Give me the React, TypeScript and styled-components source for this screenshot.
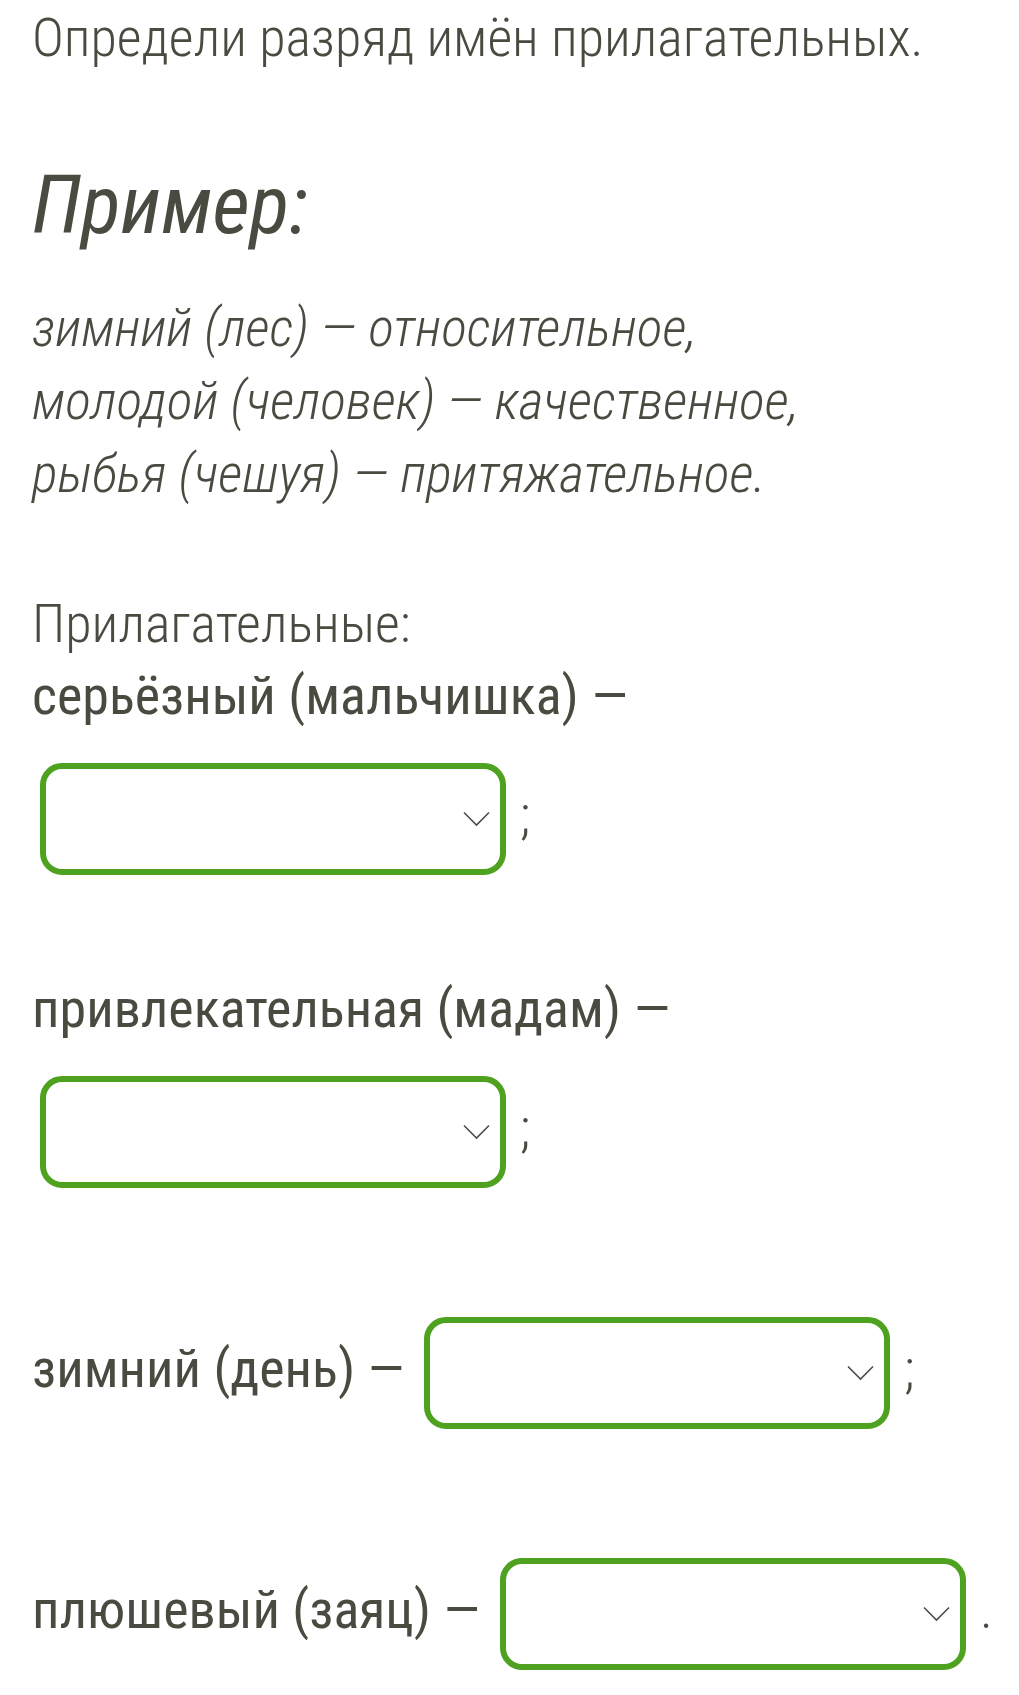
import styled, {createGlobalStyle} from "styled-components";

const GlobalStyle = createGlobalStyle`
    html, body {
        margin: 0;
        padding: 0;
        background: #ffffff;
    }
    body {
        font-family: "Roboto Condensed", Roboto, "Liberation Sans", sans-serif;
        color: #4a4b40;
    }
`;

interface Item {
    phrase: string;
    end: string;
}

const items: Item[] = [
    {phrase: "серьёзный (мальчишка) —", end: ";"},
    {phrase: "привлекательная (мадам) —", end: ";"},
    {phrase: "зимний (день) —", end: ";"},
    {phrase: "плюшевый (заяц) —", end: "."},
];

const Chevron = () => (
    <svg width="27" height="16" viewBox="0 0 27 16" fill="none">
        <path d="M1 1.5 L13.5 14 L26 1.5" stroke="#4d4d4d" strokeWidth="1.6" />
    </svg>
);

const App = () => {
    return (
        <>
            <GlobalStyle />
            <Page>
                <Task>Определи разряд имён прилагательных.</Task>
                <ExampleTitle>Пример:</ExampleTitle>
                <Example>
                    зимний (лес) — относительное,
                    <br />
                    молодой (человек) — качественное,
                    <br />
                    рыбья (чешуя) — притяжательное.
                </Example>
                <Caption>Прилагательные:</Caption>
                <List>
                    {items.map((item) => (
                        <Row key={item.phrase}>
                            <Phrase>{item.phrase}</Phrase>{" "}
                            <Answer>
                                <Dropdown role="combobox" aria-label={item.phrase}>
                                    <Chevron />
                                </Dropdown>
                                {item.end}
                            </Answer>
                        </Row>
                    ))}
                </List>
            </Page>
        </>
    );
};

export default App;


const Page = styled.main`
    padding: 2px 8px 0 32px;
    font-size: 54px;
    line-height: 72px;
`;

const Task = styled.p`
    margin: 0;
    font-weight: 300;
`;

const ExampleTitle = styled.h2`
    margin: 83px 0 0;
    font-size: 82px;
    line-height: 96px;
    font-style: italic;
    font-weight: 400;
`;

const Example = styled.p`
    margin: 38px 0 0;
    font-style: italic;
    font-weight: 300;
    line-height: 73px;
`;

const Caption = styled.p`
    margin: 78px 0 0;
    font-weight: 300;
`;

const List = styled.div`
    display: flex;
    flex-direction: column;
    gap: 67px;
`;

const Row = styled.p`
    margin: 0;
    font-weight: 300;
`;

const Phrase = styled.span`
    font-weight: 400;
`;

const Answer = styled.span`
    white-space: nowrap;
`;

const Dropdown = styled.span`
    display: inline-flex;
    align-items: center;
    justify-content: flex-end;
    box-sizing: border-box;
    width: 466px;
    height: 112px;
    margin: 31px 14px 31px 8px;
    padding-right: 10px;
    vertical-align: middle;
    border: 6px solid #4fa21f;
    border-radius: 22px;
    background: #ffffff;
`;
